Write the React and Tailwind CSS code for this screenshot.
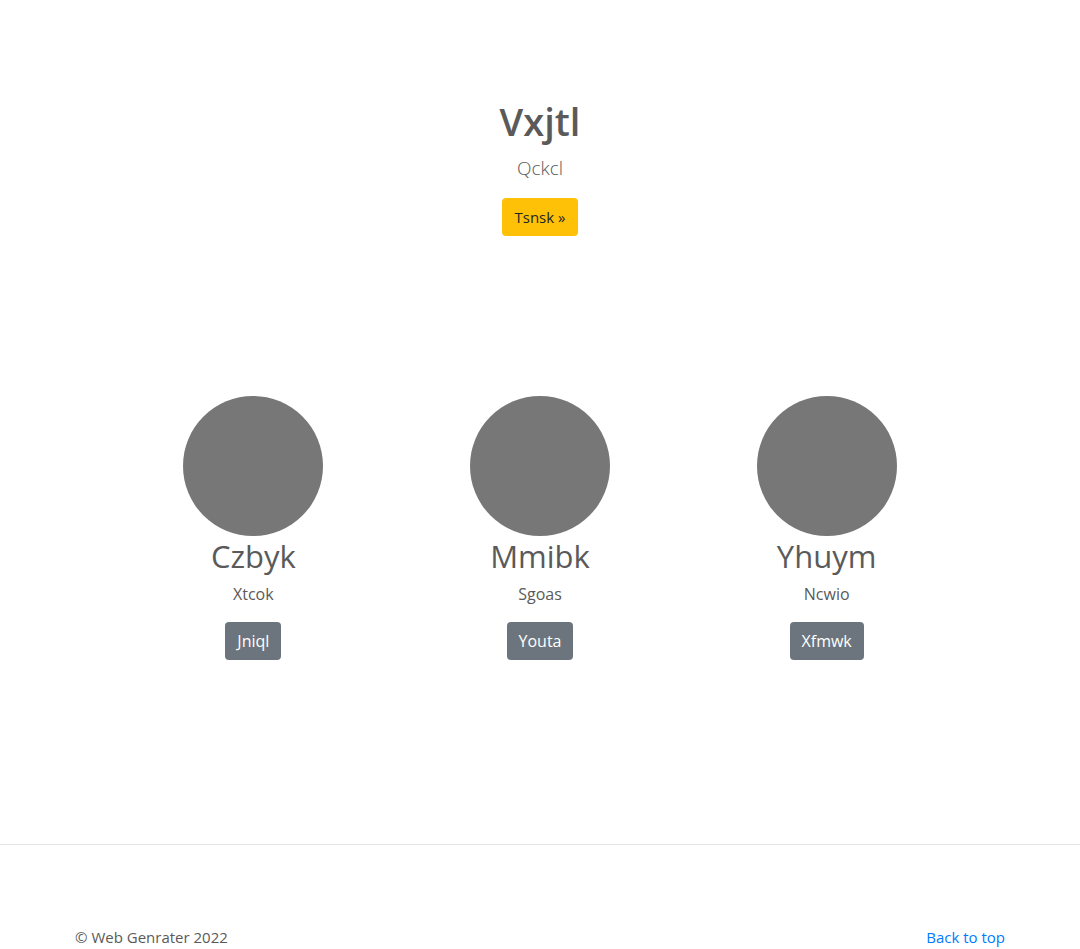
const features = [
  { title: "Czbyk", text: "Xtcok", action: "Jniql" },
  { title: "Mmibk", text: "Sgoas", action: "Youta" },
  { title: "Yhuym", text: "Ncwio", action: "Xfmwk" },
];

function Hero() {
  return (
    <section className="flex flex-col items-center px-4 pt-[98px] pb-40 text-center">
      <h1 className="mb-2 text-[38px] leading-[46px] font-semibold">Vxjtl</h1>
      <p className="mb-[14px] text-[19px] leading-8 font-light">Qckcl</p>
      <button type="button" className="h-[38px] rounded bg-[#ffc107] px-[13px] text-[15px] text-[#212529]">
        Tsnsk »
      </button>
    </section>
  );
}

function Feature({ title, text, action }) {
  return (
    <article className="flex flex-col items-center text-center">
      <div className="size-[140px] rounded-full bg-[#777777]" />
      <h2 className="mb-1.5 text-[31px] leading-10">{title}</h2>
      <p className="mb-4 text-base leading-6">{text}</p>
      <button type="button" className="h-[38px] rounded bg-[#6c757d] px-3 text-base text-white">
        {action}
      </button>
    </article>
  );
}

export default function App() {
  return (
    <div className="bg-white font-['Open_Sans','Noto_Sans',sans-serif] text-[#5a5a5a]">
      <main>
        <Hero />
        <section className="mx-auto grid max-w-[860px] grid-cols-3">
          {features.map((feature) => (
            <Feature key={feature.title} {...feature} />
          ))}
        </section>
      </main>
      <hr className="mt-[184px] mb-20 border-black/10" />
      <footer className="mx-auto flex max-w-[930px] items-center justify-between text-[15px] leading-6">
        <p>© Web Genrater 2022</p>
        <a href="#" className="text-[#007bff]">Back to top</a>
      </footer>
    </div>
  );
}
